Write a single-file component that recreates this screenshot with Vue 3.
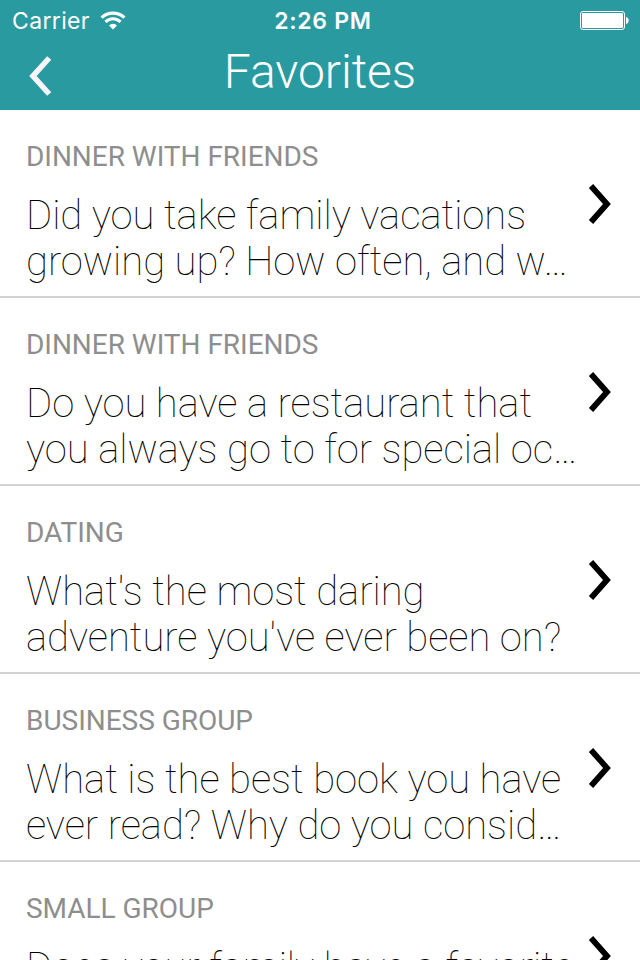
<script setup>
const rows = [
  { cat: 'DINNER WITH FRIENDS', lines: ['Did you take family vacations', 'growing up? How often, and w…'] },
  { cat: 'DINNER WITH FRIENDS', lines: ['Do you have a restaurant that', 'you always go to for special oc…'] },
  { cat: 'DATING', lines: ["What's the most daring", "adventure you've ever been on?"] },
  { cat: 'BUSINESS GROUP', lines: ['What is the best book you have', 'ever read? Why do you consid…'] },
  { cat: 'SMALL GROUP', lines: ['Does your family have a favorite'] }
]
</script>

<template>
  <div class="screen">
    <header>
      <div class="status">
        <div class="left">
          <span class="carrier">Carrier</span>
          <svg width="26" height="19" viewBox="0 0 26 19" fill="none" stroke="#fff" stroke-width="3.200">
            <path d="M1.600 6.700a16.300 16.300 0 0 1 22.800 0" /><path d="M5.500 10.900a10.700 10.700 0 0 1 15 0" stroke-width="3" /><path d="M13 18.500l-4-4a5.600 5.600 0 0 1 8 0z" fill="#fff" stroke="none" />
          </svg>
        </div>
        <span class="time">2:26 PM</span>
        <svg class="battery" width="50" height="20" viewBox="0 0 50 20">
          <rect x="0.500" y="0.500" width="44" height="18" rx="2.500" fill="none" stroke="#fff" />
          <rect x="2" y="2" width="41" height="15" rx="1" fill="#fff" />
          <path d="M46 6c3.600 0.500 3.600 6.500 0 7z" fill="#fff" />
        </svg>
      </div>
      <div class="nav">
        <svg class="back" width="24" height="42" viewBox="0 0 24 42" fill="none" stroke="#f7f5f7" stroke-width="5.600"><path d="M20.200 3L4 21l16.200 18" /></svg>
        <h1>Favorites</h1>
      </div>
    </header>
    <main>
      <article v-for="(row, i) in rows" :key="i">
        <div class="text">
          <h2>{{ row.cat }}</h2>
          <p><span v-for="line in row.lines" :key="line">{{ line }}</span></p>
        </div>
        <svg class="next" width="24" height="42" viewBox="0 0 24 42" fill="none" stroke="#000" stroke-width="5.800"><path d="M3 3l16 18L3 39" /></svg>
      </article>
    </main>
  </div>
</template>

<style>
body { margin: 0; background: #fff; }
</style>
<style scoped>
.screen { width: 640px; height: 960px; overflow: hidden; background: #fff; font-family: Roboto, sans-serif; }
header { height: 110px; background: #2a9aa1; color: #fff; }
.status { height: 40px; display: grid; grid-template-columns: 1fr auto 1fr; align-items: center; font-family: Inter, sans-serif; font-size: 23px; line-height: 28px; }
.left { display: flex; align-items: center; gap: 10px; padding-left: 12px; }
.carrier { padding-top: 2px; letter-spacing: 0.350px; }
.time { font-weight: 600; letter-spacing: 0.700px; padding: 2px 0 0 6px; }
.battery { justify-self: end; margin-top: 2px; margin-right: 10px; }
.nav { height: 70px; display: grid; grid-template-columns: 100px 1fr 100px; align-items: center; }
.back { margin: 1px 0 0 29px; }
h1 { margin: 0 0 7px; text-align: center; font-size: 48px; line-height: 60px; font-weight: 300; letter-spacing: -0.050px; }
article { box-sizing: border-box; height: 188px; border-bottom: 2px solid #d3d3d3; padding: 29px 28px 0 26px; display: flex; justify-content: space-between; }
h2 { margin: 0; font-size: 28px; line-height: 36px; font-weight: 400; color: #8e8e8e; letter-spacing: -0.030px; }
p { margin: 18px 0 0; font-size: 40px; line-height: 46px; font-weight: 100; color: #000; letter-spacing: -0.030px; }
p span { display: block; white-space: nowrap; }
.text { width: 550px; }
.next { margin-top: 44px; flex: none; }
</style>
